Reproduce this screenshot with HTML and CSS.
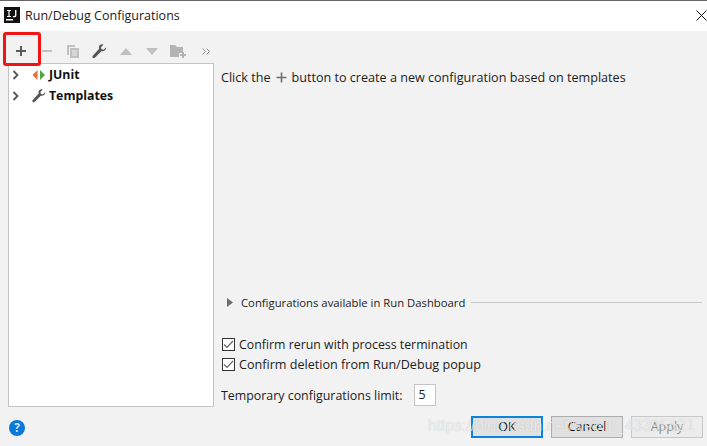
FILE: index.html
```html
<!DOCTYPE html>
<html lang="en">
<head>
    <meta charset="UTF-8">
    <title>Run/Debug Configurations</title>
    <link rel="stylesheet" href="styles.css">
</head>
<body>

<div class="dialog">
    <div class="titlebar">
        <svg class="app-icon" width="16" height="16" viewBox="0 0 16 16">
            <rect width="16" height="16" fill="#111"/>
            <rect x="2" y="12" width="7" height="1.5" fill="#fff"/>
            <path d="M3 3h4v1H5.600v5H7v1H3V9h1.400V4H3z M11 3h1.400v5.500c0 1.200-.8 1.800-2 1.800-.7 0-1.300-.2-1.700-.6l.6-1c.3.300.6.400 1 .400.500 0 .700-.300.700-.800z" fill="#fff"/>
        </svg>
        <span class="title">Run/Debug Configurations</span>
        <svg class="close-icon" width="11" height="11" viewBox="0 0 11 11">
            <path d="M.5.500l10 10M10.500.500l-10 10" stroke="#111" stroke-width="1" fill="none"/>
        </svg>
    </div>

    <div class="toolbar">
        <svg width="12" height="12" viewBox="0 0 12 12"><path d="M5 1h2v4h4v2H7v4H5V7H1V5h4z" fill="#5a5a5a"/></svg>
        <svg width="12" height="12" viewBox="0 0 12 12"><rect x="1" y="5" width="10" height="2" fill="#c0c0c0"/></svg>
        <svg width="14" height="14" viewBox="0 0 14 14"><path d="M1 1h8v2H3v8H1z" fill="#c0c0c0"/><path d="M4 4h9v10H4z" fill="#c0c0c0"/><path d="M6 7h5M6 9h5M6 11h5" stroke="#eee" stroke-width="1"/></svg>
        <svg width="15" height="15" viewBox="0 0 15 15"><path d="M14 3.500l-2.500 2.300-2-.600-.5-2L11.500.500C9.500-.300 7.300.800 7 3c-.1.700 0 1.300.2 1.800L1 11.500c-.800.800-.800 1.700-.200 2.300.6.600 1.500.6 2.300-.200l6.300-6.400c2.500.700 5-1.200 4.600-3.700z" fill="#555"/></svg>
        <svg width="14" height="9" viewBox="0 0 14 9"><path d="M7 1l6 7H1z" fill="#c0c0c0"/></svg>
        <svg width="14" height="9" viewBox="0 0 14 9"><path d="M1 1h12L7 8z" fill="#c0c0c0"/></svg>
        <svg width="16" height="14" viewBox="0 0 16 14"><path d="M0 1h5l2 2h6v6H9v4H0z" fill="#b4b4b4"/><path d="M12 8h2v2h2v2h-2v2h-2v-2h-2v-2h2z" fill="#b4b4b4"/></svg>
        <svg class="tool-more" width="8" height="7" viewBox="0 0 8 7"><path d="M.5.500l3 3-3 3M4.500.500l3 3-3 3" stroke="#8a8a8a" fill="none"/></svg>
    </div>

    <div class="content">
        <div class="tree">
            <div class="tree-row">
                <svg class="chevron" width="8" height="10" viewBox="0 0 8 10"><path d="M1.500 1l4 4-4 4" stroke="#555" stroke-width="1.800" fill="none"/></svg>
                <svg class="tree-icon" width="14" height="12" viewBox="0 0 14 12"><path d="M5.500 1v10L.5 6z" fill="#e8703a"/><path d="M8 1v10l5-5z" fill="#4fa83d"/></svg>
                <span>JUnit</span>
            </div>
            <div class="tree-row">
                <svg class="chevron" width="8" height="10" viewBox="0 0 8 10"><path d="M1.500 1l4 4-4 4" stroke="#555" stroke-width="1.800" fill="none"/></svg>
                <svg class="tree-icon" width="14" height="14" viewBox="0 0 15 15"><path d="M14 3.500l-2.500 2.300-2-.600-.5-2L11.500.500C9.500-.300 7.300.800 7 3c-.1.700 0 1.300.2 1.800L1 11.500c-.800.800-.800 1.700-.200 2.300.6.600 1.500.6 2.300-.200l6.300-6.400c2.500.700 5-1.200 4.600-3.700z" fill="#555"/></svg>
                <span>Templates</span>
            </div>
        </div>

        <div class="main">
            <p class="hint">
                <span>Click the</span>
                <svg width="11" height="11" viewBox="0 0 11 11"><path d="M4.700 .500h1.600v4.200h4.200v1.600H6.300v4.200H4.700V6.300H.5V4.700h4.200z" fill="#6e6e6e"/></svg>
                <span>button to create a new configuration based on templates</span>
            </p>

            <div class="dashboard">
                <svg width="6" height="9" viewBox="0 0 6 9"><path d="M0 0l6 4.500L0 9z" fill="#6e6e6e"/></svg>
                <span>Configurations available in Run Dashboard</span>
                <div class="line"></div>
            </div>

            <label class="check">
                <span class="box"><svg width="11" height="9" viewBox="0 0 11 9"><path d="M1 4.500l3 3 6-6.500" stroke="#666" stroke-width="1.200" fill="none"/></svg></span>
                Confirm rerun with process termination
            </label>
            <label class="check check-wide">
                <span class="box"><svg width="11" height="9" viewBox="0 0 11 9"><path d="M1 4.500l3 3 6-6.500" stroke="#666" stroke-width="1.200" fill="none"/></svg></span>
                Confirm deletion from Run/Debug popup
            </label>

            <div class="limit">
                <span>Temporary configurations limit:</span>
                <span class="limit-input">5</span>
            </div>
        </div>
    </div>

    <div class="footer">
        <span class="help">?</span>
        <div class="buttons">
            <button class="btn btn-ok">OK</button>
            <button class="btn">Cancel</button>
            <button class="btn btn-off">Apply</button>
        </div>
    </div>
</div>

<div class="red-mark"></div>
<div class="watermark">https://blog.csdn.net/weixin_43395621</div>

</body>
</html>
```

FILE: styles.css
```css
html, body {
    margin: 0;
    height: 100%;
    overflow: hidden;
}
body {
    position: relative;
    font-family: "Open Sans", "Noto Sans", sans-serif;
    font-size: 12.500px;
    color: #1c1c1c;
    background-color: #f2f2f2;
}
.dialog {
    display: flex;
    flex-direction: column;
    height: 446px;
}
.titlebar {
    display: flex;
    align-items: center;
    height: 28px;
    padding: 0 0 2px 4px;
    background-color: #fff;
    border-top: 1px solid #666;
}
.app-icon {
    margin-right: 5px;
    flex: none;
}
.title {
    color: #222;
}
.close-icon {
    margin-left: auto;
}
.toolbar {
    display: grid;
    grid-auto-flow: column;
    grid-auto-columns: 26.200px;
    justify-content: start;
    justify-items: center;
    align-items: center;
    height: 24px;
    padding: 8px 0 0 8px;
    flex: none;
}
.tool-more {
    margin-left: 4px;
}
.content {
    display: flex;
    height: 344px;
    padding-left: 8px;
    flex: none;
}
.tree {
    width: 204px;
    background-color: #fff;
    border: 1px solid #c4c4c4;
    flex: none;
}
.tree-row {
    display: flex;
    align-items: center;
    height: 21px;
    font-weight: 700;
    font-size: 12.300px;
    color: #111;
}
.chevron {
    margin-left: 3px;
    margin-right: 12px;
}
.tree-icon {
    margin-right: 3px;
    flex: none;
}
.main {
    flex: 1;
    display: flex;
    flex-direction: column;
    padding-left: 7px;
    padding-right: 5px;
}
.hint {
    display: flex;
    align-items: center;
    gap: 5px;
    margin: 5px 0 0;
    height: 18px;
    font-size: 12.600px;
}
.dashboard {
    display: flex;
    align-items: center;
    height: 18px;
    margin-top: 207px;
    margin-left: 6px;
    font-size: 11.300px;
}
.dashboard span {
    margin-left: 8px;
    white-space: nowrap;
}
.line {
    flex: 1;
    height: 1px;
    margin-left: 6px;
    background-color: #c8c8c8;
}
.check {
    display: flex;
    align-items: center;
    height: 20px;
    gap: 4px;
    white-space: nowrap;
    font-size: 12.350px;
}
.check-wide {
    font-size: 12.600px;
}
.dashboard + .check {
    margin-top: 23px;
}
.box {
    display: flex;
    align-items: center;
    justify-content: center;
    width: 11px;
    height: 11px;
    margin-left: 1px;
    border: 1px solid #333;
    background-color: #fff;
}
.limit {
    display: flex;
    align-items: center;
    gap: 11px;
    margin-top: 10px;
    height: 22px;
    font-size: 12.400px;
}
.limit-input {
    width: 16px;
    height: 20px;
    line-height: 20px;
    padding-left: 4px;
    background-color: #fff;
    border: 1px solid #c4c4c4;
}
.footer {
    display: flex;
    align-items: center;
    flex: 1;
    padding: 0 4px 0 9px;
}
.help {
    display: flex;
    align-items: center;
    justify-content: center;
    width: 16px;
    height: 16px;
    margin-top: 2px;
    border-radius: 50%;
    background-color: #0a78d7;
    color: #cfe4f7;
    font-size: 12px;
    font-weight: 700;
}
.buttons {
    display: flex;
    gap: 8px;
    margin-left: auto;
}
.btn {
    width: 72px;
    height: 22px;
    padding: 0;
    font-family: inherit;
    font-size: 12.500px;
    color: #111;
    background-color: #e1e1e1;
    border: 1px solid #adadad;
}
.btn-ok {
    border: 2px solid #0a84dc;
}
.btn-off {
    color: #8a8a8a;
    background-color: #ececec;
    border-color: #c8c8c8;
}
.red-mark {
    position: absolute;
    left: 3px;
    top: 32px;
    width: 32px;
    height: 28px;
    border: 3px solid #f01414;
    border-radius: 3px;
}
.watermark {
    position: absolute;
    left: 428px;
    top: 417px;
    font-family: "Liberation Sans", sans-serif;
    font-size: 15.700px;
    color: rgba(255, 255, 255, .7);
    text-shadow: 0 0 1px rgba(0, 0, 0, .22);
    white-space: nowrap;
}
```
